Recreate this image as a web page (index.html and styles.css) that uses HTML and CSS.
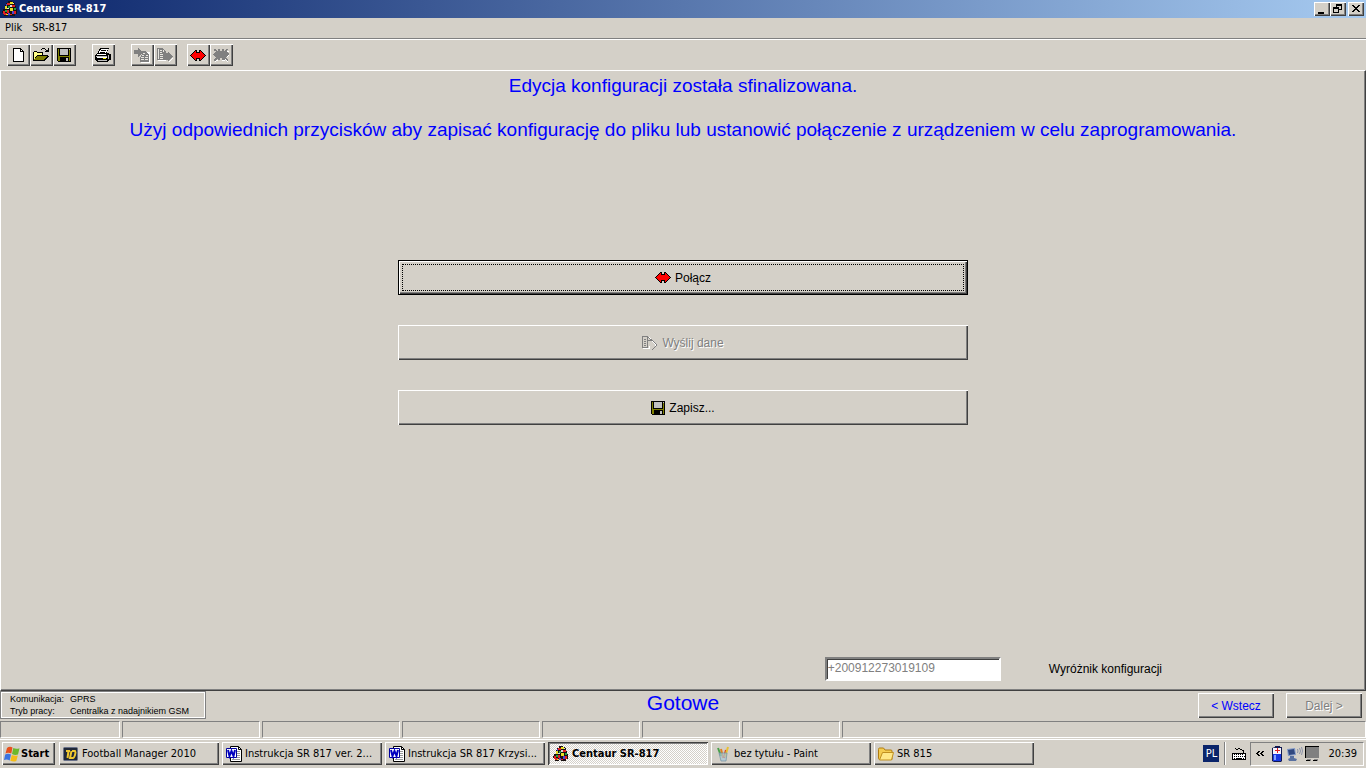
FILE: index.html
```html
<!DOCTYPE html>
<html lang="pl">
<head>
<meta charset="utf-8">
<title>Centaur SR-817</title>
<link rel="stylesheet" href="styles.css">
</head>
<body>
<svg class="defs" aria-hidden="true">
  <symbol id="arrows" viewBox="0 0 16 11">
    <path fill="#000" d="M5 0h2v2h2v-2h2v1h1v1h1v1h1v1h1v1h1v1h-1v1h-1v1h-1v1h-1v1h-1v1h-2v-2h-2v2h-2v-1h-1v-1h-1v-1h-1v-1h-1v-1h-1v-1h1v-1h1v-1h1v-1h1v-1h1z"/>
    <path fill="#f00" d="M5 1h1v2h4v-2h1v1h1v1h1v1h1v1h1v1h-1v1h-1v1h-1v1h-1v1h-1v-2h-4v2h-1v-1h-1v-1h-1v-1h-1v-1h-1v-1h1v-1h1v-1h1v-1h1z"/>
  </symbol>
  <symbol id="floppy" viewBox="0 0 14 14">
    <path fill="#000" d="M0 0h14v14H1v-1H0z"/>
    <path fill="#808000" d="M1 1h12v12H1z"/>
    <path fill="#000" d="M2 1h10v7H2zM3 9h9v5H3z"/>
    <path fill="#c0c0c0" d="M3 1h8v6H3zM9 10h2v3H9zM12 1h1v1h-1z"/>
  </symbol>
  <symbol id="logo" viewBox="0 0 16 16">
    <path fill="#181010" d="M6 0h4v1h2v1h1v3h1v3h1v5h-2v2H8v-1H6v1H2v-3H0v-2h1V8h2V4h1V2h2z"/>
    <path fill="#e02020" d="M5 2h3v2H5zM10 4h3v2h-3zM1 10h2v3H1zM5 9h2v3H5zM12 10h2v3h-2zM8 13h2v1H8zM2 12h3v2H2z"/>
    <path fill="#e8e020" d="M8 1h3v2H8zM3 5h2v3H3zM8 7h3v3H8zM4 13h2v1H4z"/>
    <path fill="#20a040" d="M6 5h2v2H6zM12 7h2v2h-2zM3 9h2v2H3z"/>
    <path fill="#5040d0" d="M4 3h1v2H4zM10 10h2v3h-2zM6 12h2v2H6z"/>
    <path fill="#ddd" d="M8 4h2v2H8zM5 7h2v1H5zM11 2h1v1h-1z"/>
  </symbol>
  <symbol id="word" viewBox="0 0 16 16">
    <path fill="#fff" stroke="#000" d="M4.500 .5h8l3 3v12h-11z"/>
    <path fill="none" stroke="#000" d="M12.500 .5v3h3"/>
    <path fill="none" stroke="#999" d="M11 5.500h3M11 7.500h3M11 9.500h3M6 13.500h8M10 11.500h4"/>
    <path fill="#fff" stroke="#0000a0" d="M.5 2.500h10v9h-10z"/>
    <path fill="none" stroke="#0000c0" stroke-width="2" d="M2 4l1.500 6 2-5 2 5 1.500-6"/>
  </symbol>
</svg>

<header class="titlebar">
  <svg class="i16 px"><use href="#logo"/></svg>
  <h1 class="title">Centaur SR-817</h1>
  <div class="winbtns">
    <button class="winbtn" aria-label="Minimalizuj"><svg class="glyph px" viewBox="0 0 10 10"><path d="M1 8h6v2H1z"/></svg></button>
    <button class="winbtn" aria-label="Przywróć"><svg class="glyph px" viewBox="0 0 10 10"><path fill-rule="evenodd" d="M3 0h6v6H6v3H0V3h3zM4 2v1h2v2h2V2zM1 5v3h4V5z"/></svg></button>
    <button class="winbtn close" aria-label="Zamknij"><svg class="glyph px" viewBox="0 0 10 10"><path d="M1 1h2v1h1v1h2V2h1V1h2v1H8v1H7v1H6v1h1v1h1v1h1v1H7V7H6V6H4v1H3v1H1V7h1V6h1V5h1V4H3V3H2V2H1z"/></svg></button>
  </div>
</header>

<nav class="menubar">
  <button class="menu">Plik</button>
  <button class="menu">SR-817</button>
</nav>

<div class="toolbar" role="toolbar">
  <div class="group">
    <button class="tool" aria-label="Nowy"><svg class="i16 px" viewBox="0 0 16 16"><path d="M3 1h8v1h1v1h1v1h1v11H3z"/><path fill="#fff" d="M4 2h6v3h3v9H4z"/><path fill="#fff" d="M11 3h1v1h-1z"/></svg></button>
    <button class="tool" aria-label="Otwórz"><svg class="i16 px" viewBox="0 0 16 16"><path d="M1 4h3v1h6v3h5v1h1l-5 5H0V5h1z"/><path fill="#ff8" d="M1 5h3v1h5v2H4v1H3v1H2v2H1z"/><path fill="#808000" d="M4 9h10l-4 4H1z"/><path d="M9 1h3v1H9zM8 2h1v1H8zM12 2h1v1h2V1h1v4h-4V4h1V3h-1z"/></svg></button>
    <button class="tool" aria-label="Zapisz"><svg class="i14 px"><use href="#floppy"/></svg></button>
  </div>
  <button class="tool print" aria-label="Drukuj"><svg class="i16 px" viewBox="0 0 16 16"><path d="M5 1h9v1h-1v2h-1v2h2v1h2v6h-2v1h-1v1H2v-1H1v-1H0V8h1V7h1V6h1V4h1V2h1z"/><path fill="#fff" d="M6 2h7v1h-1v2h-1v1H4V4h1V3h1zM2 7h9v1H2zM2 10h10v1H2z"/><path d="M6 3h5v1H6zM5 5h5v1H5z"/><path fill="#c0c0c0" d="M1 9h11v1H1zM3 13h9v1H3zM13 8h1v4h-1z"/><path fill="#ee0" d="M8 11h3v1H8z"/></svg></button>
  <div class="group send">
    <button class="tool" disabled aria-label="Odczytaj dane"><svg class="i16 px" viewBox="0 0 16 16"><path fill="#fff" d="M8 5h8v11H7v-5h1z"/><path fill="#808080" d="M0 3h4V1h1v1h1v1h1v1h1v1h1v1H8v1H7v1H6v1H5v1H4V7H0zM8 4h4v1h1v1h1v1h1v8H6v-5h1V8h1z"/><path fill="#e8e6e0" d="M9 6h2v1H9zM8 8h2v1H8zM12 8h2v1h-2zM7 10h3v1H7zM11 10h3v1h-3zM7 12h3v1H7zM11 12h3v1h-3z"/></svg></button>
    <button class="tool" disabled aria-label="Wyślij dane"><svg class="i16 px" viewBox="0 0 16 16"><path fill="#fff" d="M1 13h8v1H1zM12 15v-1h1v-1h1v-1h1v-1h1v1h-1v1h-1v1h-1v1z"/><path fill="#808080" d="M0 1h6v1h1v1h1v1h1v2h2V5h1v1h1v1h1v1h1v1h1v1h-1v1h-1v1h-1v1h-1v1h-1v-1H0z"/><path fill="#e8e6e0" d="M1 2h1v10H1zM3 3h2v1H3zM3 5h2v1H3zM3 7h3v1H3zM3 9h3v1H3zM3 11h3v1H3zM6 3h1v2H6z"/></svg></button>
  </div>
  <div class="group">
    <button class="tool" aria-label="Połącz"><svg class="arrows px"><use href="#arrows"/></svg></button>
    <button class="tool" disabled aria-label="Rozłącz"><svg class="i16 px" viewBox="0 0 16 16"><path fill="#fff" d="M14 4h2v1h-2v1h-1V5h1zM15 8h1v1h-1v1h-1V9h1zM12 11h1v1h1v1h1v2h-1v-1h-1v-1h-1zM3 13h2v1H3v1H2v-1h1zM9 13h3v1H9z"/><path fill="#808080" d="M1 2h2v1h1v1h1V2h2v2h2V2h2v2h1V3h1V2h2v1h-1v2h1v1h1v2h-1v1h-1v1h-1v1h1v1h1v2h-1v-1h-1v-1h-1v1H9v-2H7v2H5v-1H4v1H3v1H1v-2h1v-1h1v-1H2V9H1V8H0V7h1V6h1V5h1V4H1z"/></svg></button>
  </div>
</div>

<main class="page">
  <p class="headline">Edycja konfiguracji została sfinalizowana.</p>
  <p class="headline">Użyj odpowiednich przycisków aby zapisać konfigurację do pliku lub ustanowić połączenie z urządzeniem w celu zaprogramowania.</p>
  <div class="actions">
    <button class="action default"><svg class="arrows px"><use href="#arrows"/></svg>Połącz</button>
    <button class="action" disabled><svg class="i16 px" viewBox="0 0 16 16"><path fill="none" stroke="#fff" d="M1 13.500h6.500v-3M6.500 2l8 8-4 5"/><path fill="none" stroke="#808080" d="M.5 1.500h5v11h-5zM5.500 1.500l4 4h-4M9.500 4.500l5.500 5.500-5 5M2 4.500h2M2 6.500h2M2 8.500h2M2 10.500h2"/></svg>Wyślij dane</button>
    <button class="action"><svg class="i14 px"><use href="#floppy"/></svg>Zapisz...</button>
  </div>
  <div class="idrow">
    <input class="idfield" id="ident" type="text" value="+200912273019109" disabled>
    <label for="ident">Wyróżnik konfiguracji</label>
  </div>
</main>

<section class="footer">
  <dl class="info">
    <dt>Komunikacja:</dt><dd>GPRS</dd>
    <dt>Tryb pracy:</dt><dd>Centralka z nadajnikiem GSM</dd>
  </dl>
  <p class="state">Gotowe</p>
  <div class="wizard">
    <button class="step">&lt; Wstecz</button>
    <button class="step" disabled>Dalej &gt;</button>
  </div>
</section>

<div class="statusbar">
  <span class="cell"></span><span class="cell wide"></span><span class="cell wide"></span><span class="cell wide"></span><span class="cell narrow"></span><span class="cell narrow"></span><span class="cell narrow"></span><span class="cell rest"></span>
</div>

<footer class="taskbar">
  <button class="start"><svg class="i16" viewBox="0 0 16 16"><path fill="#e8501c" d="M3 2q2.500-2 5.500-.5L7.300 7.500Q4 6 1.500 7.500z"/><path fill="#6cb82c" d="M9.300 2q3 1.500 6.200 .2L14 8.500Q11 9.500 8 8z"/><path fill="#3c74e0" d="M1.200 8.500Q4 7 7 8.500l-1.300 6Q3 13 0 14z"/><path fill="#f4bc18" d="M7.800 9q3 1.400 6 .4L12.300 15q-3 1.200-6-.2z"/></svg>Start</button>
  <button class="task"><svg class="i16" viewBox="0 0 16 16"><rect x=".5" y="1.500" width="14" height="13" rx="1" fill="#202838" stroke="#687088"/><path fill="none" stroke="#f0c830" stroke-width="2" d="M3 5h4M5.500 5l-1 7M9 5h3q1 1 0 4-1 3-2 3H7l1.500-7"/></svg><span>Football Manager 2010</span></button>
  <button class="task"><svg class="i16"><use href="#word"/></svg><span>Instrukcja SR 817 ver. 2...</span></button>
  <button class="task"><svg class="i16"><use href="#word"/></svg><span>Instrukcja SR 817 Krzysi...</span></button>
  <button class="task active"><svg class="i16 px"><use href="#logo"/></svg><span>Centaur SR-817</span></button>
  <button class="task"><svg class="i16" viewBox="0 0 16 16"><path fill="none" stroke="#e08020" stroke-width="2" d="M8 12L6 3"/><path fill="none" stroke="#d83828" stroke-width="2" d="M9 12l2-8"/><path fill="none" stroke="#e8c030" stroke-width="2" d="M10 11l3-10"/><path fill="none" stroke="#48a048" stroke-width="2" d="M6 10L3 2"/><path fill="#a8c8d8" fill-opacity=".7" stroke="#7090a0" stroke-width=".7" d="M4 7h8l-1 8H6z"/></svg><span>bez tytułu - Paint</span></button>
  <button class="task"><svg class="i16" viewBox="0 0 16 16"><path fill="#f4cc50" stroke="#b07c10" d="M.5 3.500q0-1.500 1-1.500h4l1.500 2h6q1 0 1 1v8.500h-12q-1.500 0-1.500-1z"/><path fill="#ffe888" stroke="#c09020" d="M4.500 6.500h11l-2 7.500h-12z"/></svg><span>SR 815</span></button>
  <div class="systray">
    <span class="lang">PL</span>
    <div class="kbd"><svg class="i14 px" viewBox="0 0 14 14"><path d="M3 1h1v1H3zM4 2h2v1H4zM6 1h2v1H6zM8 2h2v1H8zM10 3h2v1h-2zM11 4h1v2h-1zM0 6h14v7H0z"/><path fill="#fff" d="M1 7h12v5H1z"/><path d="M2 7h1v1H2zM4 7h1v1H4zM6 7h1v1H6zM8 7h1v1H8zM10 7h1v1h-1zM2 9h1v1H2zM4 9h1v1H4zM6 9h1v1H6zM8 9h1v1H8zM10 9h1v1h-1zM12 9h1v1h-1zM2 11h1v1H2zM4 11h6v1H4zM11 11h1v1h-1z"/></svg></div>
    <div class="tray">
      <svg class="chev px" viewBox="0 0 8 5"><path d="M2 0h2v1H3v1H2v1h1v1h1v1H2V4H1V3H0V2h1V1h1zM6 0h2v1H7v1H6v1h1v1h1v1H6V4H5V3H4V2h1V1h1z"/></svg>
      <svg class="i16" viewBox="0 0 16 16"><path fill="#101850" d="M6 0h5v1h2v14l-1 1H5l-2-1V2l3-1z"/><path fill="#f4f4ff" d="M4 2h8v6H4z"/><path fill="#e02020" d="M8 2h1v2h2v1H9v2H8V5H6V4h2z"/><path fill="#1838e0" d="M4 8h8v7H4z"/><path fill="#80a0ff" d="M5 9h2v5H5z"/></svg>
      <svg class="i16" viewBox="0 0 16 16"><path fill="#8098c8" d="M0 3l8-1 1 7-8 1z"/><path fill="#304880" d="M1 4l6-1 1 5-6 1z"/><path fill="#5870a0" d="M3 10h4v2l3 1-1 2H2l-1-2 2-1z"/><path fill="none" stroke="#8890a8" d="M10.500 3q1 2 0 4M12.500 2q2 3 0 6M14.500 1q2 4 0 8"/></svg>
      <svg class="i16 px" viewBox="0 0 16 16"><path d="M0 0h14v12H0z"/><path fill="#808080" d="M1 1h13v11H1z"/><path fill="#888" d="M2 13h4v2H2zM9 13h4v2H9z"/><path d="M1 14h4v1H1zM8 14h4v1H8z"/></svg>
      <time class="clock">20:39</time>
    </div>
  </div>
</footer>
</body>
</html>
```
FILE: styles.css
```css
* { box-sizing: border-box; }

:root {
  --face: #d4d0c8;
  --hi: #fff;
  --shadow: #808080;
  --dark: #404040;
  --ui: "DejaVu Sans Condensed", "DejaVu Sans", sans-serif;
  --form: "Liberation Sans", sans-serif;
}

body {
  margin: 0;
  min-height: 100vh;
  display: flex;
  flex-direction: column;
  background: var(--face);
  color: #000;
  font: 11px/14px var(--ui);
}

button {
  display: flex;
  align-items: center;
  padding: 0;
  border: 0;
  background: var(--face);
  color: inherit;
  font: inherit;
}

h1, p, dl, dd { margin: 0; font-weight: normal; }
svg { flex: none; display: block; }
.defs { position: absolute; width: 0; height: 0; }
.px { shape-rendering: crispEdges; }
.i16 { width: 16px; height: 16px; }
.i14 { width: 14px; height: 14px; }
.arrows { width: 16px; height: 11px; }
.glyph { width: 10px; height: 10px; }
.chev { width: 8px; height: 5px; }

.titlebar {
  display: flex;
  align-items: center;
  height: 18px;
  padding: 0 2px;
  background: linear-gradient(to right, #0a246a, #a6caf0);
}
.title {
  flex: 1;
  padding-left: 1px;
  color: #fff;
  font: bold 11px/14px var(--ui);
}
.winbtns { display: flex; }
.winbtn {
  justify-content: center;
  width: 16px;
  height: 14px;
  box-shadow: inset 1px 1px var(--hi), inset -1px -1px var(--dark), inset -2px -2px var(--shadow);
}
.close { margin-left: 2px; }

.menubar {
  display: flex;
  gap: 10px;
  height: 21px;
  padding: 0 5px;
  border-bottom: 1px solid var(--shadow);
}

.toolbar {
  display: flex;
  align-items: center;
  height: 31px;
  padding: 0 7px;
  border-top: 1px solid var(--hi);
}
.group { display: flex; }
.tool {
  justify-content: center;
  width: 23px;
  height: 22px;
  padding-right: 2px;
  box-shadow: inset 1px 1px var(--hi), inset -1px -1px var(--dark), inset -2px -2px var(--shadow);
}
.print { margin: 0 16px; }
.send { margin-right: 10px; }

.page {
  flex: 1;
  display: flex;
  flex-direction: column;
  align-items: center;
  padding: 4px 0 9px;
  border: 1px solid;
  border-color: var(--hi) var(--dark) var(--dark) var(--hi);
  box-shadow: inset -1px -1px var(--shadow);
  font: 12px/14px var(--form);
}
.headline {
  margin-bottom: 22px;
  color: #00f;
  font-size: 19px;
  line-height: 22px;
  text-align: center;
}
.actions {
  display: flex;
  flex-direction: column;
  gap: 30px;
  width: 100%;
  max-width: 570px;
  margin-top: 97px;
}
.action {
  justify-content: center;
  gap: 4px;
  height: 35px;
  box-shadow: inset 1px 1px var(--hi), inset -1px -1px var(--dark), inset -2px -2px var(--shadow);
}
.default {
  border: 1px solid #000;
  outline: 1px dotted #000;
  outline-offset: -5px;
}
.action:disabled, .step:disabled {
  color: var(--shadow);
  text-shadow: 1px 1px var(--hi);
}
.idrow {
  display: flex;
  align-items: center;
  align-self: flex-end;
  gap: 48px;
  margin-top: auto;
  padding-right: 203px;
}
.idfield {
  width: 176px;
  height: 24px;
  padding: 0 1px 2px;
  border: 2px solid;
  border-color: var(--shadow) var(--hi) var(--hi) var(--shadow);
  box-shadow: inset 1px 1px var(--dark);
  background: #fff;
  color: var(--shadow);
  font: 12px/14px var(--form);
}

.footer {
  display: grid;
  grid-template-columns: 1fr auto 1fr;
  height: 29px;
  font: 12px/14px var(--form);
}
.info {
  justify-self: start;
  display: grid;
  grid-template-columns: 60px auto;
  align-content: center;
  width: 206px;
  height: 28px;
  padding-left: 9px;
  border: 1px solid var(--shadow);
  box-shadow: inset 1px 1px var(--hi), inset -1px -1px var(--hi);
  font-size: 9px;
  line-height: 12px;
}
.state {
  color: #00f;
  font-size: 21px;
  line-height: 24px;
}
.wizard {
  justify-self: end;
  display: flex;
  gap: 12px;
  padding: 2px 4px 0 0;
}
.step {
  justify-content: center;
  width: 76px;
  height: 25px;
  color: #00f;
  box-shadow: inset 1px 1px var(--hi), inset -1px -1px var(--dark), inset -2px -2px var(--shadow);
}

.statusbar {
  display: flex;
  gap: 2px;
  height: 19px;
  padding: 1px 0;
}
.cell {
  width: 120px;
  border: 1px solid;
  border-color: var(--shadow) var(--hi) var(--hi) var(--shadow);
}
.wide { width: 138px; }
.narrow { width: 98px; }
.rest { flex: 1; }

.taskbar {
  display: flex;
  align-items: center;
  gap: 3px;
  height: 29px;
  padding: 0 2px 1px;
  border-top: 1px solid var(--hi);
}
.start, .task {
  height: 23px;
  box-shadow: inset 1px 1px var(--hi), inset -1px -1px var(--dark), inset -2px -2px var(--shadow);
}
.start {
  gap: 1px;
  width: 53px;
  margin-right: 1px;
  padding-left: 2px;
  font-weight: bold;
}
.task {
  gap: 3px;
  width: 160px;
  padding: 0 4px;
  white-space: nowrap;
}
.active {
  padding: 1px 5px 0;
  background: repeating-conic-gradient(#fff 0 25%, var(--face) 0 50%) 0 0 / 2px 2px;
  box-shadow: inset 1px 1px var(--dark), inset -1px -1px var(--hi), inset 2px 2px var(--shadow);
  font-weight: bold;
}
.systray {
  display: flex;
  align-items: center;
  margin-left: auto;
}
.lang {
  width: 16px;
  margin-right: 5px;
  background: #0a246a;
  color: #fff;
  line-height: 17px;
  text-align: center;
}
.kbd {
  display: flex;
  align-items: center;
  height: 23px;
  padding: 0 4px 0 7px;
  border-left: 1px solid var(--shadow);
  box-shadow: inset 1px 0 var(--hi);
}
.tray {
  display: flex;
  align-items: center;
  gap: 2px;
  height: 24px;
  padding: 0 6px 0 5px;
  border: 1px solid;
  border-color: var(--shadow) var(--hi) var(--hi) var(--shadow);
}
.chev { margin-right: 3px; }
.clock { margin-left: 5px; }
```
